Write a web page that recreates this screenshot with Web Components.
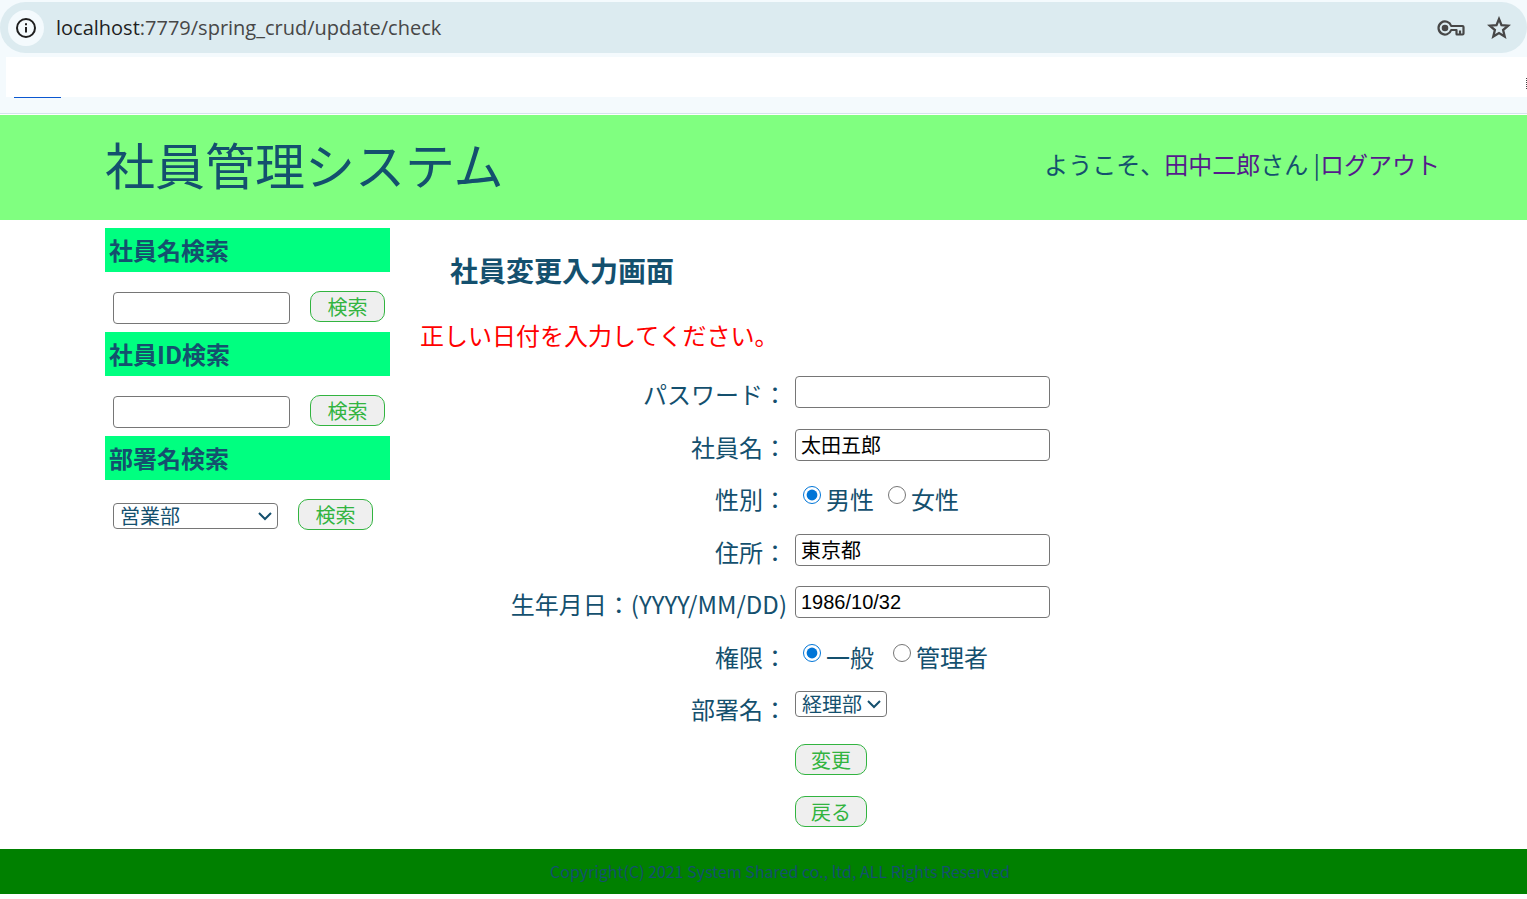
<!DOCTYPE html>
<html lang="ja">
<head>
<meta charset="utf-8">
<title>社員管理システム</title>
<style>
  body {
    margin: 0;
    background: #fff;
    color: #14506e;
    font-family: "Noto Sans CJK JP", sans-serif;
    font-weight: 400;
    font-size: 24px;
    line-height: 36px;
    --page-start: 105px;
    --page-end: 72px;
  }
</style>
</head>
<body>
<employee-app></employee-app>
<script>
const chevron = `url("data:image/svg+xml,%3Csvg xmlns='http://www.w3.org/2000/svg' width='14' height='10' fill='none' stroke='%2314506e' stroke-width='2'%3E%3Cpath d='M1 2l6 6 6-6'/%3E%3C/svg%3E")`;
const controls = `
  * { box-sizing: border-box; }
  input, select, button { margin: 0; font-size: 20px; }
  input[type=text], input[type=password] {
    height: 32px; padding: 1px 5px; border: 1px solid #767676; border-radius: 4px;
    background: #fff; color: #000; font-family: "Liberation Sans", "Noto Sans CJK JP", sans-serif;
  }
  select {
    appearance: none; height: 26px; padding: 0 6px; border: 1px solid #767676; border-radius: 4px;
    background: #fff ${chevron} no-repeat right 5px center;
    color: #14506e; font-family: inherit; font-weight: inherit; line-height: 24px;
  }
  button {
    height: 31px; padding: 0; border: 1px solid #32b440; border-radius: 10px;
    background: #efefef; color: #32b440; font-family: inherit; font-weight: inherit; line-height: 29px;
  }`;

function define(name, css, html) {
  const template = document.createElement('template');
  template.innerHTML = `<style>${css}</style>${html}`;
  customElements.define(name, class extends HTMLElement {
    constructor() {
      super();
      this.attachShadow({ mode: 'open' }).append(template.content.cloneNode(true));
    }
  });
}

define('address-bar', `
  :host { display: block; background: #f4fafd; padding-top: 2px; border-bottom: 1px solid #fff; }
  * { box-sizing: border-box; }
  .bar {
    display: flex; align-items: center; height: 51px; padding: 0 16px 0 8px; gap: 12px;
    border-radius: 26px; background: #dcebf0; color: #474747;
    font: 400 20px/28px "Open Sans", sans-serif;
  }
  .info { display: grid; place-items: center; width: 36px; height: 36px; border-radius: 50%; background: #f4fafd; }
  .url { flex: 1; }
  b { font-weight: 400; color: #1f1f1f; }
  svg { display: block; }
  .icons { display: flex; align-items: center; gap: 22px; }
  .bookmarks { display: flex; justify-content: flex-end; align-items: flex-end; height: 40px; margin: 4px 0 0 6px; padding-bottom: 7px; background: #fff; }
  .grip { width: 1px; height: 12px; background: repeating-linear-gradient(#444 0 1px, #fff 1px 2px); }
  .edge { height: 17px; padding-left: 14px; border-bottom: 1px solid #d4e4ec; }
  .mark { width: 47px; height: 1px; background: #0b57d0; }
`, `
  <div class="bar">
    <span class="info"><svg width="20" height="20" viewBox="0 0 20 20" fill="none" stroke="#1f1f1f" stroke-width="2"><circle cx="10" cy="10" r="9"/><path d="M10 9v5.5M10 5.2v2"/></svg></span>
    <span class="url"><b>localhost</b>:7779/spring_crud/update/check</span>
    <span class="icons">
      <svg width="28" height="16" viewBox="0 0 28 16" fill="none" stroke="#474747" stroke-width="2.200" stroke-linejoin="round"><path d="M14.2 6H25.500Q26.500 6 26.500 7V13.500Q26.500 14.500 25.500 14.500H20Q19.500 14.500 19.500 14V10H14.200A6.500 6.500 0 1 1 14.200 6Z"/><path d="M23 14v-3.500"/><circle cx="8" cy="8" r="2.200" fill="#474747"/></svg>
      <svg width="24" height="24" viewBox="0 0 24 24" fill="none" stroke="#474747" stroke-width="2.300"><path d="M12 3l2.500 6.200 6.700.5-5.100 4.300 1.600 6.500L12 17l-5.700 3.500 1.600-6.500-5.100-4.300 6.700-.5Z"/></svg>
    </span>
  </div>
  <div class="bookmarks"><div class="grip"></div></div>
  <div class="edge"><div class="mark"></div></div>
`);

define('site-header', `
  :host {
    display: flex; align-items: center; justify-content: space-between; box-sizing: border-box;
    min-height: 105px; padding: 0 calc(var(--page-end) + 15px) 8px var(--page-start); background: #80ff80;
  }
  h1 { margin: 0; font-size: 50px; font-weight: inherit; line-height: 75px; }
  a { color: #551a8b; text-decoration: none; }
`, `
  <h1>社員管理システム</h1>
  <nav>ようこそ、<a href="#user">田中二郎</a>さん |<a href="#logout">ログアウト</a></nav>
`);

define('search-block', `
  :host { display: block; }
  h2 { margin: 0; padding: 4px; background: #00ff80; font-size: 24px; font-weight: 700; line-height: 36px; }
  .body { height: 60px; }
`, `<h2><slot name="title"></slot></h2><div class="body"><slot></slot></div>`);

define('search-panel', `
  ${controls}
  :host { display: block; flex: none; width: 285px; }
  form { display: flex; align-items: center; gap: 20px; padding: 19px 0 0 8px; }
  input { width: 177px; }
  select { width: 165px; }
  button { width: 75px; margin-bottom: 3px; }
`, `
  <search-block><label slot="title" for="s-name">社員名検索</label>
    <form><input type="text" id="s-name"><button type="button">検索</button></form></search-block>
  <search-block><label slot="title" for="s-id">社員ID検索</label>
    <form><input type="text" id="s-id"><button type="button">検索</button></form></search-block>
  <search-block><label slot="title" for="s-dept">部署名検索</label>
    <form><select id="s-dept"><option>営業部</option><option>経理部</option><option>総務部</option></select><button type="button">検索</button></form></search-block>
`);

define('form-row', `
  :host { display: grid; grid-template-columns: 367px auto; column-gap: 8px; justify-content: start; align-items: start; }
  .label { text-align: right; white-space: nowrap; }
  .field { display: flex; align-items: flex-start; }
`, `<div class="label"><slot name="label"></slot></div><div class="field"><slot></slot></div>`);

define('employee-form', `
  ${controls}
  :host { display: block; flex: 1; }
  h2 { margin: 21px 0 26px 30px; font-size: 28px; line-height: 42px; font-weight: 700; }
  .error { margin: 0 0 23px; color: #f00; }
  form { display: grid; grid-auto-rows: 1fr; min-height: 473px; }
  input[type=text], input[type=password] { width: 255px; }
  input[type=radio] { flex: none; width: 18px; height: 18px; margin: 5px 5px 0 0; accent-color: #0075d7; }
  .choices { display: flex; gap: 14px; padding-left: 8px; }
  .choices.wide { gap: 19px; }
  .choices label { display: flex; align-items: flex-start; }
  select { width: 92px; }
  button { width: 72px; }
`, `
  <h2>社員変更入力画面</h2>
  <p class="error">正しい日付を入力してください。</p>
  <form>
    <form-row><label slot="label" for="pw">パスワード：</label><input type="password" id="pw"></form-row>
    <form-row><label slot="label" for="name">社員名：</label><input type="text" id="name" value="太田五郎"></form-row>
    <form-row><span slot="label">性別：</span><div class="choices" role="radiogroup" aria-label="性別"><label><input type="radio" name="gender" checked>男性</label><label><input type="radio" name="gender">女性</label></div></form-row>
    <form-row><label slot="label" for="address">住所：</label><input type="text" id="address" value="東京都"></form-row>
    <form-row><label slot="label" for="birth">生年月日：(YYYY/MM/DD)</label><input type="text" id="birth" value="1986/10/32"></form-row>
    <form-row><span slot="label">権限：</span><div class="choices wide" role="radiogroup" aria-label="権限"><label><input type="radio" name="role" checked>一般</label><label><input type="radio" name="role">管理者</label></div></form-row>
    <form-row><label slot="label" for="dept">部署名：</label><select id="dept"><option>経理部</option><option>営業部</option><option>総務部</option></select></form-row>
    <form-row><button type="button">変更</button></form-row>
    <form-row><button type="button">戻る</button></form-row>
  </form>
`);

define('site-footer', `
  :host {
    display: block; padding: 10px var(--page-end) 11px var(--page-start);
    background: #008000; font-size: 16px; line-height: 24px; text-align: center;
  }
`, `<slot></slot>`);

define('employee-app', `
  :host { display: block; }
  main { display: flex; align-items: flex-start; gap: 30px; padding: 8px var(--page-end) 0 var(--page-start); }
`, `
  <address-bar></address-bar>
  <site-header></site-header>
  <main><search-panel></search-panel><employee-form></employee-form></main>
  <site-footer>Copyright(C) 2021 System Shared co., ltd, ALL Rights Reserved</site-footer>
`);
</script>
</body>
</html>
